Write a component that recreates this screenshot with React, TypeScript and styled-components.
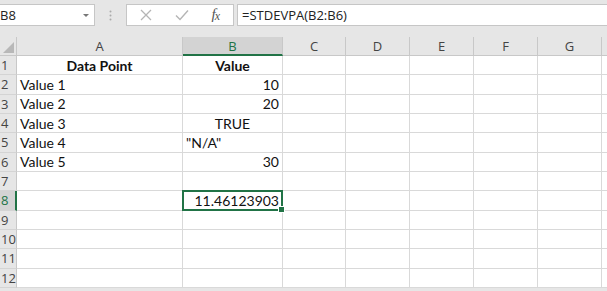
import React from 'react';
import styled, { createGlobalStyle } from 'styled-components';

const GlobalStyle = createGlobalStyle`
  html, body {
    margin: 0;
    padding: 0;
    background: #e6e6e6;
    overflow: hidden;
  }
`;

interface activeType {
  active?: boolean;
}

interface cellType {
  align?: string;
  bold?: boolean;
  selected?: boolean;
}

const Page = styled.div`
  width: 607px;
  height: 291px;
  display: flex;
  flex-direction: column;
  background: #e6e6e6;
`;

const FormulaBar = styled.div`
  height: 37px;
  box-sizing: border-box;
  padding: 4px 0 0 0;
  display: flex;
  align-items: flex-start;
`;

const NameBox = styled.div`
  width: 95px;
  height: 22px;
  box-sizing: border-box;
  background: #fff;
  border: 1px solid #c6c6c6;
  border-left: none;
  display: flex;
  align-items: center;
  justify-content: space-between;
  padding: 0 5px 0 0;
  font-family: 'Open Sans', 'Noto Sans', sans-serif;
  font-size: 13px;
  color: #222;
`;

const Caret = styled.span`
  width: 0;
  height: 0;
  border-left: 3px solid transparent;
  border-right: 3px solid transparent;
  border-top: 3px solid #777;
  margin-top: 1px;
`;

const Grip = styled.div`
  width: 31px;
  height: 22px;
  display: flex;
  align-items: center;
  justify-content: center;
`;

const ButtonBox = styled.div`
  width: 108px;
  height: 22px;
  box-sizing: border-box;
  background: #fff;
  border: 1px solid #c6c6c6;
  display: flex;
  align-items: center;
  justify-content: space-between;
  padding: 0 14px 0 13px;
`;

const Fx = styled.span`
  font-family: 'Liberation Serif', 'DejaVu Serif', serif;
  font-style: italic;
  font-size: 15px;
  color: #555;
  letter-spacing: -1px;
  sub {
    font-size: 12px;
    vertical-align: -1px;
  }
`;

const FormulaInput = styled.div`
  flex: 1;
  height: 22px;
  margin-left: 3px;
  box-sizing: border-box;
  background: #fff;
  border: 1px solid #c6c6c6;
  border-right: none;
  display: flex;
  align-items: center;
  padding-left: 4px;
  font-family: 'Open Sans', 'Noto Sans', sans-serif;
  font-size: 13px;
  color: #222;
`;

const Sheet = styled.div`
  display: grid;
  grid-template-columns: 17px 166px 100px 63px 64px 64px 64px 64px 1fr;
  grid-template-rows: 19px repeat(12, 19.33px);
  background: #fff;
`;

const Corner = styled.div`
  background: #e6e6e6;
  border-right: 1px solid #c8c8c8;
  border-bottom: 1px solid #c8c8c8;
  display: flex;
  align-items: flex-end;
  justify-content: flex-end;
  padding: 0 2px 2px 0;
`;

const ColHead = styled.div<activeType>`
  background: ${(props) => (props.active ? '#d3d3d3' : '#e6e6e6')};
  color: ${(props) => (props.active ? '#217346' : '#444')};
  border-right: 1px solid #c8c8c8;
  border-bottom: ${(props) =>
    props.active ? '2px solid #217346' : '1px solid #c8c8c8'};
  display: flex;
  align-items: center;
  justify-content: center;
  font-family: 'Open Sans', 'Noto Sans', sans-serif;
  font-size: 13px;
`;

const RowHead = styled.div<activeType>`
  background: ${(props) => (props.active ? '#d3d3d3' : '#e6e6e6')};
  color: ${(props) => (props.active ? '#217346' : '#444')};
  border-right: ${(props) =>
    props.active ? '2px solid #217346' : '1px solid #c8c8c8'};
  border-bottom: 1px solid #d4d4d4;
  display: flex;
  align-items: center;
  padding-left: 1px;
  overflow: hidden;
  font-family: 'Open Sans', 'Noto Sans', sans-serif;
  font-size: 13px;
`;

const Cell = styled.div<cellType>`
  position: relative;
  border-right: 1px solid #d9d9d9;
  border-bottom: 1px solid #d9d9d9;
  display: flex;
  align-items: center;
  justify-content: ${(props) =>
    props.align === 'right'
      ? 'flex-end'
      : props.align === 'center'
      ? 'center'
      : 'flex-start'};
  padding: 0 3px;
  font-family: Lato, 'Liberation Sans', sans-serif;
  font-size: 14px;
  font-weight: ${(props) => (props.bold ? 700 : 400)};
  color: #111;
  white-space: nowrap;
  ${(props) =>
    props.selected &&
    `
    &::after {
      content: '';
      position: absolute;
      left: -1px;
      top: -1px;
      right: -1px;
      bottom: -1px;
      border: 2px solid #217346;
    }
  `}
`;

const Handle = styled.span`
  position: absolute;
  right: -3px;
  bottom: -3px;
  width: 5px;
  height: 5px;
  background: #217346;
  border: 1px solid #fff;
  z-index: 2;
`;

const columns = ['A', 'B', 'C', 'D', 'E', 'F', 'G', ''];

const rows: { a: string; b: string; align: string; bold?: boolean }[] = [
  { a: 'Data Point', b: 'Value', align: 'center', bold: true },
  { a: 'Value 1', b: '10', align: 'right' },
  { a: 'Value 2', b: '20', align: 'right' },
  { a: 'Value 3', b: 'TRUE', align: 'center' },
  { a: 'Value 4', b: '"N/A"', align: 'left' },
  { a: 'Value 5', b: '30', align: 'right' },
  { a: '', b: '', align: 'left' },
  { a: '', b: '11.46123903', align: 'right' },
  { a: '', b: '', align: 'left' },
  { a: '', b: '', align: 'left' },
  { a: '', b: '', align: 'left' },
  { a: '', b: '', align: 'left' },
];

function App() {
  return (
    <Page>
      <GlobalStyle />
      <FormulaBar>
        <NameBox>
          <span>B8</span>
          <Caret />
        </NameBox>
        <Grip>
          <svg width="3" height="11" viewBox="0 0 3 11">
            <circle cx="1.5" cy="1.5" r="1" fill="#aaa" />
            <circle cx="1.5" cy="5.5" r="1" fill="#aaa" />
            <circle cx="1.5" cy="9.5" r="1" fill="#aaa" />
          </svg>
        </Grip>
        <ButtonBox>
          <svg width="12" height="12" viewBox="0 0 12 12">
            <path d="M1 1 L11 11 M11 1 L1 11" stroke="#b5b5b5" strokeWidth="1.3" />
          </svg>
          <svg width="14" height="12" viewBox="0 0 14 12">
            <path d="M1 6.5 L5 10.5 L13 1.5" stroke="#b5b5b5" strokeWidth="1.4" fill="none" />
          </svg>
          <Fx>
            f<sub>x</sub>
          </Fx>
        </ButtonBox>
        <FormulaInput>=STDEVPA(B2:B6)</FormulaInput>
      </FormulaBar>
      <Sheet>
        <Corner>
          <svg width="11" height="11" viewBox="0 0 11 11">
            <path d="M11 0 L11 11 L0 11 Z" fill="#b8b8b8" />
          </svg>
        </Corner>
        {columns.map((c, i) => (
          <ColHead key={i} active={c === 'B'}>
            {c}
          </ColHead>
        ))}
        {rows.map((r, i) => (
          <React.Fragment key={i}>
            <RowHead active={i === 7}>{i + 1}</RowHead>
            <Cell bold={r.bold} align={r.bold ? 'center' : 'left'}>
              {r.a}
            </Cell>
            <Cell bold={r.bold} align={r.align} selected={i === 7}>
              {r.b}
              {i === 7 && <Handle />}
            </Cell>
            {columns.slice(2).map((c, j) => (
              <Cell key={j} />
            ))}
          </React.Fragment>
        ))}
      </Sheet>
    </Page>
  );
}

export default App;
